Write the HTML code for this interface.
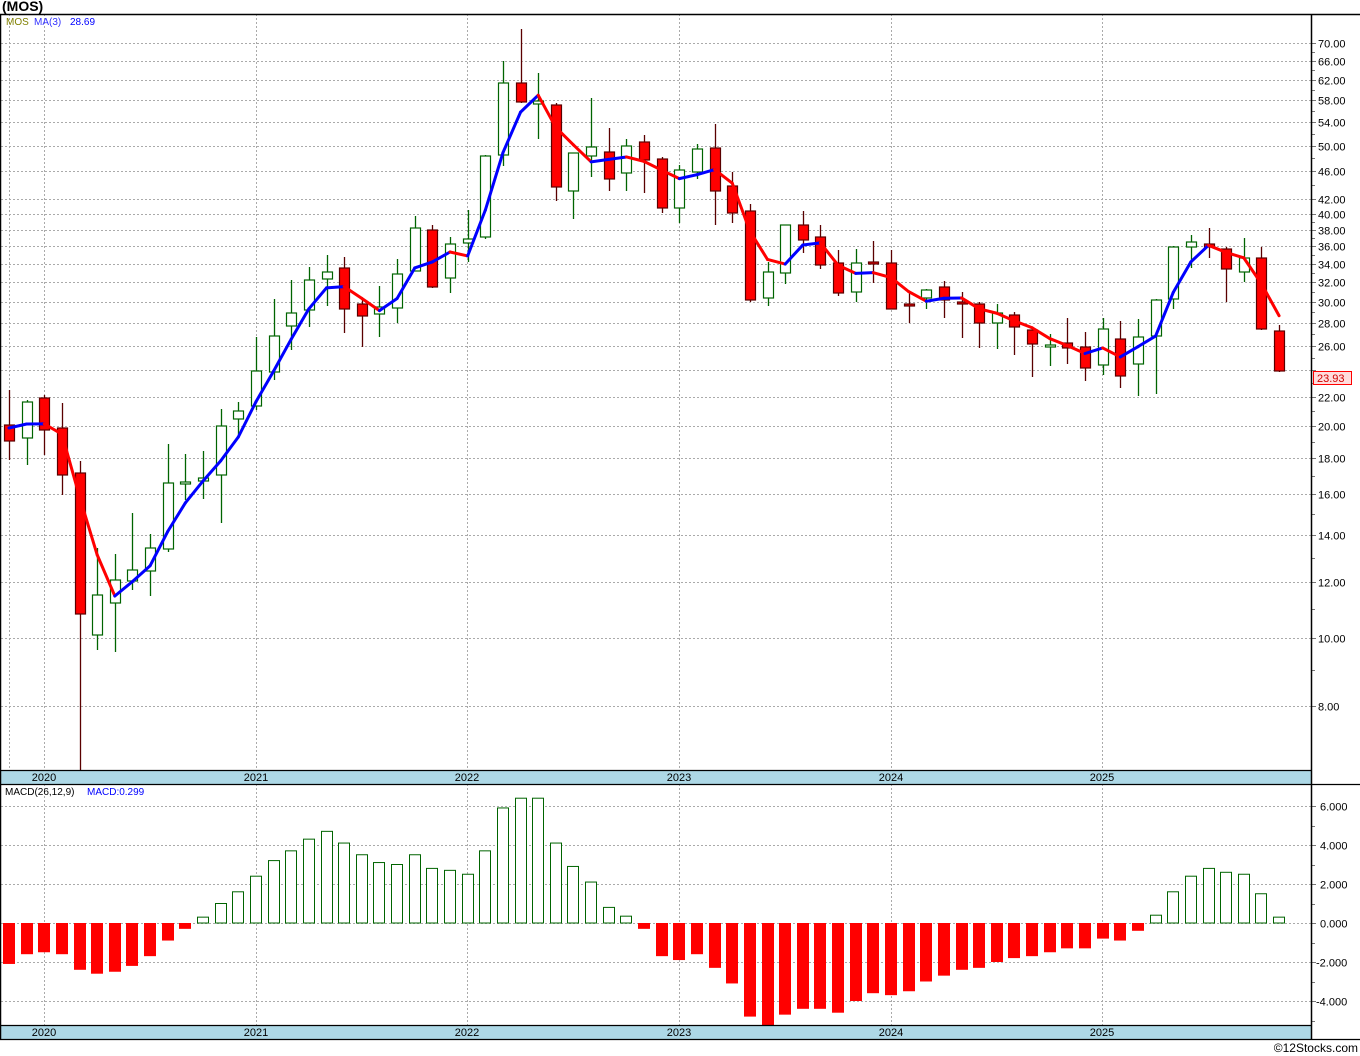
<!DOCTYPE html>
<html><head><meta charset="utf-8"><style>
html,body{margin:0;padding:0;background:#fff;}
svg{display:block;font-family:"Liberation Sans",sans-serif;}
</style></head><body>
<svg id="c" width="1360" height="1056" xmlns="http://www.w3.org/2000/svg"></svg>
<script>
var S=[];
function a(s){S.push(s);}
var X=function(i){return 9+17.64*i;};
var yp=function(p){return 43+(4.2485-Math.log(p))*305.7;};
var pf=function(y){return Math.exp(4.2485-(y-43)/305.7);};
a('<rect x="0" y="0" width="1360" height="1056" fill="#fff"/>');
var prices=[70,66,62,58,54,50,46,42,40,38,36,34,32,30,28,26,24,22,20,18,16,14,12,10,8];
prices.forEach(function(p){var y=Math.round(yp(p))+0.5;
 a('<line x1="1" x2="1311" y1="'+y+'" y2="'+y+'" stroke="#aaa" stroke-dasharray="2,2"/>');
 a('<line x1="1311" x2="1316" y1="'+y+'" y2="'+y+'" stroke="#777"/>');
 if(p!==24)a('<text x="1318" y="'+(y+4)+'" font-size="11" fill="#000">'+p.toFixed(2)+'</text>');
});
[68,64,60,56,52,48,44,9,11,13,15,17,19,21,23,25,27,29,31,33,35,37,39].forEach(function(p){var y=Math.round(yp(p))+0.5;a('<line x1="1311" x2="1315" y1="'+y+'" y2="'+y+'" stroke="#777"/>');});
var years=[44,256,467,679,891,1102];
[9].concat(years).forEach(function(x){a('<line x1="'+(x+0.5)+'" x2="'+(x+0.5)+'" y1="14" y2="770" stroke="#aaa" stroke-dasharray="2,2"/>');});
years.forEach(function(x){a('<line x1="'+(x+0.5)+'" x2="'+(x+0.5)+'" y1="784" y2="1025" stroke="#aaa" stroke-dasharray="2,2"/>');});
var m0=923,mu=19.5;
[6,4,2,0,-2,-4].forEach(function(v){var y=Math.round(m0-v*mu)+0.5;
 a('<line x1="1" x2="1311" y1="'+y+'" y2="'+y+'" stroke="#aaa" stroke-dasharray="2,2"/>');
 a('<line x1="1311" x2="1316" y1="'+y+'" y2="'+y+'" stroke="#777"/>');
 a('<text x="'+(v<0?1316:1320)+'" y="'+(y+4)+'" font-size="11" fill="#000">'+v.toFixed(3)+'</text>');
});
[5,3,1,-1,-3,-5].forEach(function(v){var y=Math.round(m0-v*mu)+0.5;a('<line x1="1311" x2="1315" y1="'+y+'" y2="'+y+'" stroke="#777"/>');});
var C=[
['r',390,460,425,441],['g',400,465,402,438],['r',395,455,398,430],['r',403,495,428,475],['r',461,770,473,614],
['g',548,650,595,635],['g',554,652,580,603],['g',513,590,570,581],['g',534,596,548,571],['g',444,552,483,549],
['g',454,500,482,484],['g',451,499,478,481],['g',409,523,426,475],['g',402,437,411,419],['g',337,410,371,406],
['g',299,380,336,372],['g',280,350,313,326],['g',267,327,280,310],['g',255,306,272,279],['r',257,333,268,309],
['r',300,347,304,316],['g',286,337,307,314],['g',259,323,274,308],['g',216,271,228,271],['r',225,288,230,287],
['g',237,293,244,278],['g',210,262,239,243],['g',155,239,156,237],['g',61,166,83,155],['r',29,103,83,102],
['g',73,139,101,104],['r',103,201,105,187],['g',153,219,153,191],['g',98,177,147,156],['r',128,191,152,179],
['g',139,191,146,173],['r',135,193,142,160],['r',157,213,159,208],['g',165,223,170,208],['g',144,179,149,172],
['r',124,225,148,191],['r',172,223,186,213],['r',204,302,211,300],['g',262,306,272,298],['g',225,284,225,273],
['r',211,253,225,240],['r',225,269,237,265],['r',250,296,263,293],['g',249,302,263,292],['r',241,283,262,263],
['r',250,309,263,309],['r',293,323,304,305],['g',289,309,290,298],['r',281,318,287,300],['r',292,338,302,304],
['r',302,348,304,323],['g',304,349,313,323],['r',312,355,315,327],['r',330,377,330,344],['g',334,366,345,346],
['r',318,364,343,348],['r',332,381,347,368],['g',318,375,329,365],['r',321,388,339,376],['g',319,396,337,364],
['g',299,394,300,336],['g',246,309,247,299],['g',235,268,242,247],['r',228,258,244,247],['r',247,302,249,269],
['g',238,282,258,272],['r',247,330,258,329],['r',325,372,331,371]];
C.forEach(function(c,i){var x=Math.round(X(i));var g=c[0]=='g';
 var wc=g?'#006400':'#5a0000';
 a('<line x1="'+(x+0.5)+'" x2="'+(x+0.5)+'" y1="'+c[1]+'" y2="'+c[2]+'" stroke="'+wc+'" stroke-width="1.3"/>');
 var h=Math.max(c[4]-c[3],2);
 a('<rect x="'+(x-4.5)+'" y="'+c[3]+'" width="10" height="'+h+'" fill="'+(g?'#fff':'#f00')+'" stroke="'+(g?'#006400':'#5a0000')+'" stroke-width="1.2"/>');
});
var closes=C.map(function(c){return pf(c[0]=='g'?c[3]:c[4]);});
var ma=closes.map(function(v,i){var s=0,n=0;for(var k=Math.max(0,i-2);k<=i;k++){s+=closes[k];n++;}return yp(s/n);});
ma[0]=428;ma[1]=424;
for(var i=1;i<ma.length;i++){var col=ma[i]<ma[i-1]?'#0000ff':'#ff0000';
 a('<line x1="'+X(i-1)+'" y1="'+ma[i-1]+'" x2="'+X(i)+'" y2="'+ma[i]+'" stroke="'+col+'" stroke-width="3" stroke-linecap="round"/>');}
var M=[-2.1,-1.6,-1.5,-1.6,-2.4,-2.6,-2.5,-2.2,-1.7,-0.9,-0.3,0.3,1.0,1.6,2.4,3.2,3.7,4.3,4.7,4.1,3.5,3.1,3.0,3.5,2.8,2.7,2.5,3.7,5.9,6.4,6.4,4.1,2.9,2.1,0.8,0.35,-0.3,-1.7,-1.9,-1.6,-2.3,-3.1,-4.8,-5.3,-4.7,-4.4,-4.4,-4.6,-4.0,-3.6,-3.7,-3.5,-3.0,-2.7,-2.4,-2.3,-2.0,-1.8,-1.7,-1.5,-1.3,-1.3,-0.8,-0.9,-0.4,0.4,1.6,2.4,2.8,2.6,2.5,1.5,0.3];
M.forEach(function(v,i){var x=Math.round(X(i));var y=m0-v*mu;
 if(v>=0)a('<rect x="'+(x-5.5)+'" y="'+y+'" width="11" height="'+(m0-y)+'" fill="#fff" stroke="#006400" stroke-width="1"/>');
 else a('<rect x="'+(x-6)+'" y="'+m0+'" width="12" height="'+Math.min(y-m0,1025-m0)+'" fill="#f00"/>');
});
a('<rect x="1" y="770" width="1310" height="14" fill="#add8e6"/>');
a('<rect x="1" y="1025" width="1310" height="14" fill="#add8e6"/>');
a('<line x1="0" x2="1360" y1="14.5" y2="14.5" stroke="#000" stroke-width="1.5"/>');
a('<line x1="0.5" x2="0.5" y1="14" y2="1040" stroke="#000" stroke-width="1.5"/>');
a('<line x1="1311.5" x2="1311.5" y1="14" y2="1040" stroke="#000" stroke-width="1.5"/>');
[770,784,1025,1039].forEach(function(y){a('<line x1="0" x2="'+(y==784||y==1039?1360:1311)+'" y1="'+(y+0.5)+'" y2="'+(y+0.5)+'" stroke="#000" stroke-width="1.2"/>');});
years.forEach(function(x,k){var t=2020+k;
 a('<text x="'+x+'" y="781" font-size="11" text-anchor="middle" fill="#000">'+t+'</text>');
 a('<text x="'+x+'" y="1036" font-size="11" text-anchor="middle" fill="#000">'+t+'</text>');});
a('<rect x="1313.5" y="371.5" width="38" height="13" fill="#fdd" stroke="#f00"/>');
a('<text x="1317" y="382" font-size="11" fill="#c00">23.93</text>');
a('<text x="2" y="11" font-size="14" font-weight="bold" fill="#000">(MOS)</text>');
a('<text x="6" y="25" font-size="10" fill="#808000">MOS</text>');
a('<text x="34" y="25" font-size="10" fill="#3333ff">MA(3)</text>');
a('<text x="70" y="25" font-size="10" fill="#0000ff">28.69</text>');
a('<text x="5" y="795" font-size="10" fill="#000">MACD(26,12,9)</text>');
a('<text x="87" y="795" font-size="10" fill="#0000ff">MACD:0.299</text>');
a('<text x="1358" y="1052" font-size="12" text-anchor="end" fill="#000">©12Stocks.com</text>');
document.getElementById('c').innerHTML=S.join('');
</script>
</body></html>
